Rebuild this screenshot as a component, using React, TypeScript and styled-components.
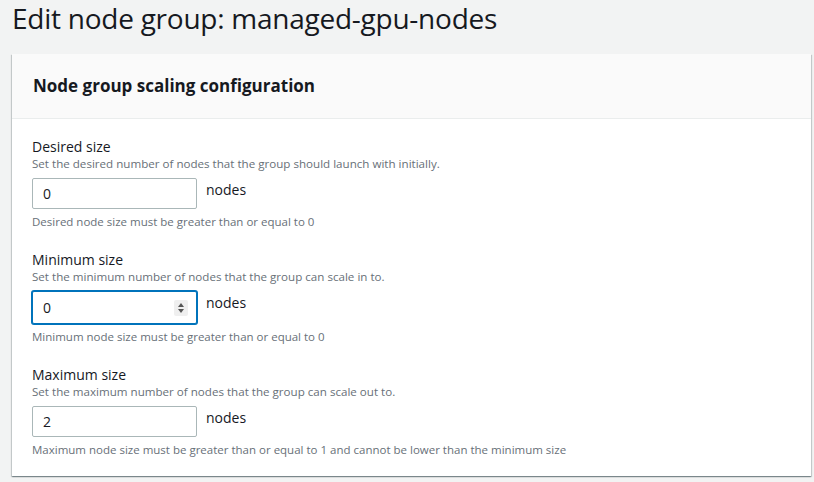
import styled, { createGlobalStyle } from 'styled-components'

const GlobalStyle = createGlobalStyle`
  body {
    margin: 0;
    background: #f2f3f3;
    font-family: "Open Sans", "Noto Sans", sans-serif;
    color: #16191f;
  }
`

const Page = styled.div`
  padding: 0 3px 6px 12px;
`

const PageTitle = styled.h1`
  margin: 0;
  font-size: 28px;
  font-weight: 400;
  line-height: 36px;
  letter-spacing: -0.25px;
  color: #16191f;
`

const Card = styled.section`
  margin-top: 18px;
  background: #fff;
  box-shadow: 0 1px 1px 0 rgba(0, 28, 36, 0.3), 1px 1px 1px 0 rgba(0, 28, 36, 0.15),
    -1px 1px 1px 0 rgba(0, 28, 36, 0.15);
`

const CardHeader = styled.header`
  height: 64px;
  display: flex;
  align-items: center;
  padding: 0 21px;
  background: #fafafa;
  border-bottom: 1px solid #eaeded;
`

const CardTitle = styled.h2`
  margin: 0;
  font-size: 17px;
  font-weight: 700;
  line-height: 22px;
`

const CardBody = styled.div`
  display: flex;
  flex-direction: column;
  gap: 21px;
  padding: 19px 20px 18px;
`

const Field = styled.div`
  display: flex;
  flex-direction: column;
`

const Label = styled.label`
  font-size: 14px;
  line-height: 18px;
`

const Description = styled.div`
  font-size: 11.6px;
  line-height: 16px;
  color: #687078;
`

const InputRow = styled.div`
  display: flex;
  align-items: flex-start;
  gap: 9px;
  margin-top: 6px;
`

const InputBox = styled.div<{ $focused?: boolean }>`
  box-sizing: border-box;
  width: 165px;
  height: ${(p) => (p.$focused ? 33 : 31)}px;
  display: flex;
  align-items: center;
  padding: 0 8px 0 10px;
  background: #fff;
  border: 1px solid ${(p) => (p.$focused ? '#0073bb' : '#aab7b8')};
  border-radius: 2px;
  box-shadow: ${(p) => (p.$focused ? '0 0 0 1px #0073bb' : 'none')};
`

const InputValue = styled.span`
  flex: 1;
  font-size: 14px;
  line-height: 20px;
`

const Spinner = styled.span`
  width: 14px;
  height: 16px;
  display: flex;
  flex-direction: column;
  align-items: center;
  justify-content: center;
  gap: 2px;
  background: #efefef;
  border-radius: 2px;
`

const Arrow = styled.span<{ $down?: boolean }>`
  width: 0;
  height: 0;
  border-left: 3.5px solid transparent;
  border-right: 3.5px solid transparent;
  ${(p) => (p.$down ? 'border-top: 4px solid #555;' : 'border-bottom: 4px solid #555;')}
`

const Unit = styled.span`
  font-size: 14px;
  line-height: 24px;
`

const Constraint = styled.div`
  margin-top: 5px;
  font-size: 11.5px;
  line-height: 16px;
  color: #687078;
`

interface SizeFieldProps {
  label: string
  description: string
  value: string
  constraint: string
  focused?: boolean
}

function SizeField({ label, description, value, constraint, focused }: SizeFieldProps) {
  return (
    <Field>
      <Label>{label}</Label>
      <Description>{description}</Description>
      <InputRow>
        <InputBox $focused={focused}>
          <InputValue>{value}</InputValue>
          {focused && (
            <Spinner>
              <Arrow />
              <Arrow $down />
            </Spinner>
          )}
        </InputBox>
        <Unit>nodes</Unit>
      </InputRow>
      <Constraint>{constraint}</Constraint>
    </Field>
  )
}

export default function App() {
  return (
    <Page>
      <GlobalStyle />
      <PageTitle>Edit node group: managed-gpu-nodes</PageTitle>
      <Card>
        <CardHeader>
          <CardTitle>Node group scaling configuration</CardTitle>
        </CardHeader>
        <CardBody>
          <SizeField
            label="Desired size"
            description="Set the desired number of nodes that the group should launch with initially."
            value="0"
            constraint="Desired node size must be greater than or equal to 0"
          />
          <SizeField
            label="Minimum size"
            description="Set the minimum number of nodes that the group can scale in to."
            value="0"
            constraint="Minimum node size must be greater than or equal to 0"
            focused
          />
          <SizeField
            label="Maximum size"
            description="Set the maximum number of nodes that the group can scale out to."
            value="2"
            constraint="Maximum node size must be greater than or equal to 1 and cannot be lower than the minimum size"
          />
        </CardBody>
      </Card>
    </Page>
  )
}
